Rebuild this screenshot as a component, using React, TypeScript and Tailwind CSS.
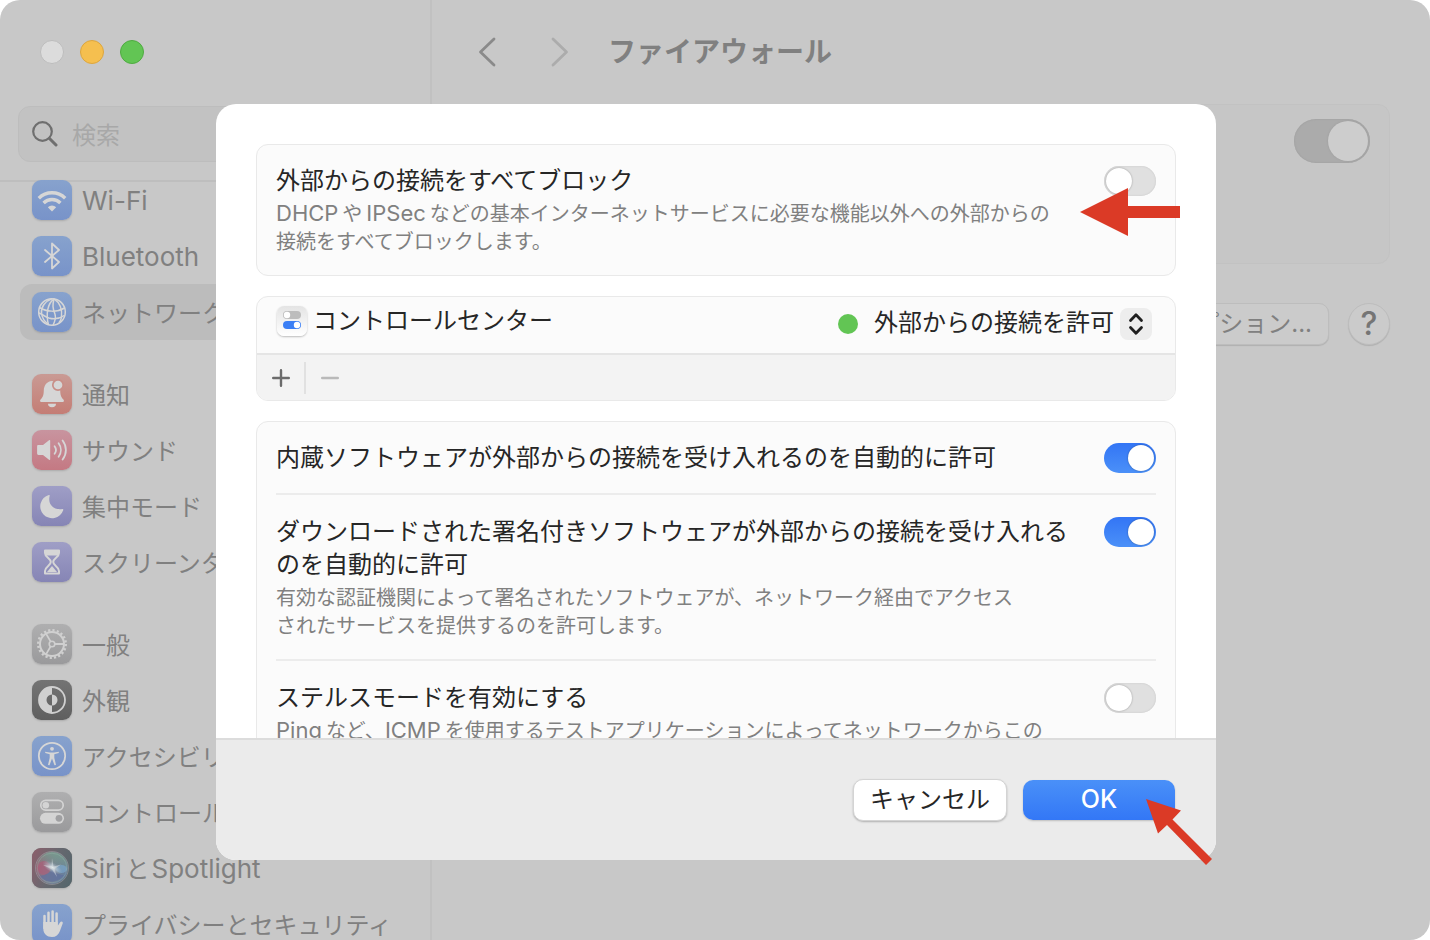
import type { ReactNode } from "react";
import clsx from "clsx";

const icons: Record<string, ReactNode> = {
    wifi: (
        <>
            <g fill="none" stroke="#d6d6d6" strokeWidth="3.4">
                <path d="M6.8 18.2a18.6 18.6 0 0 1 26.4 0" />
                <path d="M11.6 23a11.9 11.9 0 0 1 16.8 0" />
            </g>
            <path d="M20 31.400l-4.200-4.200a6 6 0 0 1 8.400 0z" fill="#d6d6d6" />
        </>
    ),
    bluetooth: (
        <path
            d="M13 14l14 12-7 6.5V7.5l7 6.5-14 12"
            fill="none"
            stroke="#d6d6d6"
            strokeWidth="1.8"
            strokeLinejoin="round"
            strokeLinecap="round"
        />
    ),
    globe: (
        <g fill="none" stroke="#d6d6d6" strokeWidth="1.5">
            <circle cx="20" cy="20" r="13.3" />
            <path d="M22 6.8c-6 4-8.5 15-5.5 26.2" />
            <path d="M22 6.8c-1.5 6-1.5 9 1 15.5 1 3 0 7-2 11" />
            <path d="M22 6.8c5 3.2 8.5 9 7.5 18.5-.5 2.2-1 3.5-2.5 5.5" />
            <path d="M20 6.8C13 9 9 15 9.5 21c.5 4.5 3 8.5 6.5 11" />
            <path d="M7.500 15.500c7 4.500 17.500 5 25 .5" />
            <path d="M6.8 21c3 1 6 3.5 10 5 5 1.500 11 .5 15.500-2.500" />
        </g>
    ),
    bell: (
        <>
            <path
                d="M20 7c-5.600.5-8 4.500-8.200 9.300-.2 5.500-1 7-3.200 9.200-1.100 1.200-.6 2.500.9 2.500h21c1.500 0 2-1.300.9-2.500-2.200-2.200-3-3.700-3.200-9.200A9.500 9.500 0 0 0 20 7z"
                fill="#d6d6d6"
            />
            <path d="M16 29.800h8a4 3.400 0 0 1-8 0z" fill="#d6d6d6" />
            <circle cx="26" cy="11" r="5.2" fill="#d6d6d6" stroke="#c88e87" strokeWidth="1.7" />
        </>
    ),
    sound: (
        <>
            <path d="M6.500 15h4.500l6-4.800c.7-.5 1.200-.2 1.200.6v18.400c0 .8-.5 1.100-1.200.6L11 25H6.500c-.9 0-1.400-.5-1.400-1.400v-7.200c0-.9.5-1.400 1.400-1.400z" fill="#d6d6d6" />
            <g fill="none" stroke="#d6d6d6" strokeWidth="1.8" strokeLinecap="round">
                <path d="M22.600 16.200c1.700 2.300 1.700 5.300 0 7.600" />
                <path d="M26.600 13.300c3 4 3 9.400 0 13.400" />
                <path d="M30.600 10.500c4.400 5.800 4.400 13.200 0 19" />
            </g>
        </>
    ),
    moon: (
        <path
            d="M16.800 9c.6-.3 1.200.1.9.8-2.200 7.800 3.200 14.600 12.600 13.200.8-.1 1.300.4.9 1.200A11.800 11.800 0 1 1 16.800 9z"
            fill="#d6d6d6"
        />
    ),
    hourglass: (
        <>
            <path
                d="M13 8.500h14v2.500c0 4.500-5.800 5.500-5.800 9s5.800 4.500 5.800 9v2.500H13V29c0-4.500 5.800-5.500 5.800-9S13 15.500 13 11z"
                fill="none"
                stroke="#d6d6d6"
                strokeWidth="2"
                strokeLinejoin="round"
            />
            <path d="M14 8.500h12v5H14z" fill="#d6d6d6" />
            <path d="M20 24l5 6H15z" fill="#d6d6d6" />
        </>
    ),
    gear: (
        <g fill="none" stroke="#d0d0d0">
            <circle cx="20" cy="20" r="13.8" strokeWidth="2.4" strokeDasharray="2.2 2.136" />
            <circle cx="20" cy="20" r="12" strokeWidth="2" />
            <circle cx="20" cy="20" r="2.8" strokeWidth="1.6" />
            <path d="M22.800 20H32M18.500 17.400L14 9.600M18.500 22.600L14 30.400" strokeWidth="1.8" />
        </g>
    ),
    appearance: (
        <>
            <circle cx="20" cy="20" r="13" fill="none" stroke="#d0d0d0" strokeWidth="1.8" />
            <path d="M20 7a13 13 0 0 0 0 26v-7.500a5.500 5.500 0 0 1 0-11z" fill="#d0d0d0" />
            <path d="M20 14.500a5.500 5.500 0 0 1 0 11z" fill="#d0d0d0" />
        </>
    ),
    accessibility: (
        <>
            <circle cx="20" cy="20" r="13.2" fill="none" stroke="#d6d6d6" strokeWidth="1.8" />
            <circle cx="20" cy="12.8" r="1.9" fill="#d6d6d6" />
            <path
                d="M13.200 15.700l4.800.9h4l4.800-.9v1.300l-4.500 1.200v3.500l1.700 7.200-1.500.4-2.500-6.800-2.500 6.800-1.500-.4 1.700-7.200v-3.500l-4.500-1.200z"
                fill="#d6d6d6"
            />
        </>
    ),
    switches: (
        <>
            <rect x="8.8" y="8.4" width="22.4" height="9.8" rx="4.9" fill="none" stroke="#d4d4d4" strokeWidth="1.7" />
            <circle cx="13.8" cy="13.3" r="3.3" fill="#d4d4d4" />
            <rect x="8" y="20.8" width="24" height="11" rx="5.5" fill="#d4d4d4" />
            <circle cx="27" cy="26.3" r="3.4" fill="#a0a0a2" />
        </>
    ),
    siri: (
        <>
            <defs>
                <radialGradient id="siri-core">
                    <stop offset="0" stopColor="#e2e8ea" />
                    <stop offset="0.35" stopColor="#c3d0d8" stopOpacity="0.7" />
                    <stop offset="1" stopColor="#a0b0c0" stopOpacity="0" />
                </radialGradient>
                <linearGradient id="siri-back" x1="0" x2="1" y1="0.3" y2="0.7">
                    <stop offset="0" stopColor="#87606c" />
                    <stop offset="0.5" stopColor="#67686f" />
                    <stop offset="1" stopColor="#56666c" />
                </linearGradient>
                <linearGradient id="siri-orb" x1="0" x2="1" y1="0.3" y2="0.7">
                    <stop offset="0" stopColor="#9c5f72" />
                    <stop offset="0.45" stopColor="#7b7f90" />
                    <stop offset="1" stopColor="#64809f" />
                </linearGradient>
                <linearGradient id="siri-top" x1="0.3" x2="0.1" y1="0" y2="1">
                    <stop offset="0" stopColor="#769a8d" stopOpacity="0.9" />
                    <stop offset="0.5" stopColor="#769a8d" stopOpacity="0" />
                </linearGradient>
            </defs>
            <rect width="40" height="40" fill="url(#siri-back)" />
            <circle cx="20" cy="20" r="16" fill="url(#siri-orb)" />
            <circle cx="20" cy="20" r="16" fill="url(#siri-top)" />
            <ellipse cx="12" cy="20" rx="6.5" ry="7" fill="#b05c78" opacity="0.6" />
            <ellipse cx="29.5" cy="21" rx="5.5" ry="4" fill="#7ba5cb" opacity="0.7" />
            <path d="M7 28c8-1 12-4 14-8 2 5 6 7 11 7-5 8-19 9-25 1z" fill="#5d6ea0" opacity="0.6" />
            <ellipse cx="20.5" cy="19.5" rx="11" ry="5" fill="url(#siri-core)" transform="rotate(30 20.5 19.5)" />
            <path d="M20 10l1.500 8.500 7.500-2-6.500 4.500 2.500 8-5-7.500-9-4.500 8.500 1z" fill="#dfe5e8" opacity="0.5" />
            <circle cx="20" cy="20" r="16.5" fill="none" stroke="#a3a3a8" strokeWidth="0.8" opacity="0.7" />
            <circle cx="20" cy="20" r="14.8" fill="none" stroke="#9fb5ad" strokeWidth="0.6" opacity="0.6" />
        </>
    ),
    hand: (
        <>
            <path
                d="M11.300 18v6.500C11.300 30 15 33 20 33c4 0 6.300-2 7.700-5.500l3-8c.6-1.700-1.400-2.800-2.500-1.200L25.600 22V18z"
                fill="#d6d6d6"
            />
            <g stroke="#d6d6d6" strokeWidth="2.5" strokeLinecap="round">
                <path d="M12.500 12v12M16.500 8.800v14M20.600 7.500v15M24.600 9.500v13" />
            </g>
        </>
    ),
};

const tints = {
    blue: "from-[#87a2cd] to-[#7893c9]",
    red: "from-[#c99a94] to-[#c47d75]",
    pink: "from-[#c8949f] to-[#c47983]",
    purple: "from-[#9f9ec6] to-[#8685b5]",
    gray: "from-[#afafb0] to-[#9a9a9c]",
    dark: "from-[#747474] to-[#5f5f5f]",
};

interface NavItem {
    icon: string;
    tint: keyof typeof tints;
    label: ReactNode;
    active?: boolean;
}

const navGroups: NavItem[][] = [
    [
        { icon: "wifi", tint: "blue", label: <span className="text-[26px]">Wi-Fi</span> },
        { icon: "bluetooth", tint: "blue", label: <span className="text-[26px]">Bluetooth</span> },
        { icon: "globe", tint: "blue", label: "ネットワーク", active: true },
    ],
    [
        { icon: "bell", tint: "red", label: "通知" },
        { icon: "sound", tint: "pink", label: "サウンド" },
        { icon: "moon", tint: "purple", label: "集中モード" },
        { icon: "hourglass", tint: "purple", label: "スクリーンタイム" },
    ],
    [
        { icon: "gear", tint: "gray", label: "一般" },
        { icon: "appearance", tint: "dark", label: "外観" },
        { icon: "accessibility", tint: "blue", label: "アクセシビリティ" },
        { icon: "switches", tint: "gray", label: "コントロールセンター" },
        {
            icon: "siri",
            tint: "dark",
            label: (
                <>
                    <span className="mr-1 text-[26px]">Siri</span>と<span className="ml-0.5 text-[26px]">Spotlight</span>
                </>
            ),
        },
        { icon: "hand", tint: "blue", label: "プライバシーとセキュリティ" },
    ],
];

const Sidebar = () => (
    <aside className="flex w-[432px] shrink-0 flex-col border-r-2 border-[#c1c1c1]">
        <div className="h-[182px] shrink-0 border-b-2 border-[#bebebe]">
            <div className="flex gap-4 px-10 pt-10">
                <button aria-label="閉じる" className="size-6 rounded-full border border-[#bdbdbd] bg-[#dcdcdc]" />
                <button aria-label="しまう" className="size-6 rounded-full border border-[#dca63f] bg-[#f5bf4f]" />
                <button aria-label="拡大" className="size-6 rounded-full border border-[#4fab41] bg-[#62c554]" />
            </div>
            <label className="mx-[18px] mt-[42px] flex h-14 items-center gap-[14px] rounded-xl border border-[#bdbdbd] bg-[#c2c2c2] pl-[13px]">
                <svg viewBox="0 0 26 26" className="size-[26px] shrink-0" fill="none" stroke="#6f6f6f" strokeLinecap="round">
                    <circle cx="10.5" cy="10.5" r="9.3" strokeWidth="2.2" />
                    <path d="M17.500 17.500l6.500 6.500" strokeWidth="3" />
                </svg>
                <input
                    type="text"
                    aria-label="検索"
                    placeholder="検索"
                    className="min-w-0 flex-1 bg-transparent pt-[3px] text-2xl outline-none placeholder:text-[#a8a8a8]"
                />
            </label>
        </div>
        <nav className="-mt-2.5 flex flex-col gap-[26px] px-5">
            {navGroups.map((group, idx) => (
                <ul key={idx}>
                    {group.map((item) => (
                        <li key={item.icon}>
                            <a
                                href="#"
                                className={clsx(
                                    "flex h-14 items-center gap-2.5 rounded-xl pl-3 whitespace-nowrap",
                                    item.active && "bg-[#bcbcbc]",
                                )}
                            >
                                <span
                                    className={clsx(
                                        "size-10 shrink-0 overflow-hidden rounded-[9px] bg-linear-to-b shadow-[0_1px_2px_rgba(0,0,0,0.15)]",
                                        tints[item.tint],
                                    )}
                                >
                                    <svg viewBox="0 0 40 40" className="size-10">
                                        {icons[item.icon]}
                                    </svg>
                                </span>
                                <span className="pt-[3px]">{item.label}</span>
                            </a>
                        </li>
                    ))}
                </ul>
            ))}
        </nav>
    </aside>
);

const MainPane = () => (
    <main className="min-w-0 flex-1 px-10">
        <header className="flex h-[104px] items-center">
            <button aria-label="戻る" className="ml-1.5">
                <svg viewBox="0 0 18 30" className="h-[30px] w-[18px]" fill="none" stroke="#8a8a8a" strokeWidth="2.8" strokeLinecap="round" strokeLinejoin="round">
                    <path d="M16 2L2.500 15 16 28" />
                </svg>
            </button>
            <button aria-label="進む" disabled className="ml-[55px]">
                <svg viewBox="0 0 18 30" className="h-[30px] w-[18px]" fill="none" stroke="#acacac" strokeWidth="2.8" strokeLinecap="round" strokeLinejoin="round">
                    <path d="M2 2l13.500 13L2 28" />
                </svg>
            </button>
            <h1 className="ml-[39px] pt-0.5 text-[28px] font-bold text-[#808080]">ファイアウォール</h1>
        </header>
        <div className="flex h-40 justify-end rounded-xl border border-[#c2c2c2] bg-[#c6c6c6] pt-[14px] pr-[19px]">
            <input
                type="checkbox"
                role="switch"
                aria-label="ファイアウォール"
                defaultChecked
                className="h-11 w-[76px] appearance-none rounded-full bg-[#ababab] p-0.5 shadow-[inset_0_0_2px_#9a9a9a] before:block before:size-10 before:rounded-full before:bg-[#cdcdcd] before:shadow-[0_0_2px_#999] checked:before:ml-8"
            />
        </div>
        <div className="mt-[39px] flex justify-end gap-[19px]">
            <button className="h-[42px] rounded-[10px] border border-[#bdbdbd] bg-[#cbcbcb] px-4 text-2xl leading-9 shadow-[0_1px_1px_rgba(0,0,0,0.12)]">
                オプション...
            </button>
            <button
                aria-label="ヘルプ"
                className="size-[42px] rounded-full border border-[#bdbdbd] bg-[#cbcbcb] text-[32px] leading-10 font-medium text-[#757575] shadow-[0_1px_1px_rgba(0,0,0,0.12)]"
            >
                ?
            </button>
        </div>
    </main>
);

interface SettingRowProps {
    id: string;
    title: string;
    lines?: ReactNode[];
    checked?: boolean;
}

const SettingRow = ({ id, title, lines = [], checked = false }: SettingRowProps) => (
    <div className="flex items-start justify-between gap-8 border-[#ececec] pt-5 pb-[19px] not-last:border-b-2 first:pt-[19px]">
        <div className="min-w-0">
            <label htmlFor={id} className="block text-2xl leading-[33px]">
                {title}
            </label>
            {lines.length > 0 && (
                <p className="mt-[3px] text-xl leading-7 whitespace-nowrap text-[#808080]">
                    {lines.map((line, idx) => (
                        <span key={idx} className="block">
                            {line}
                        </span>
                    ))}
                </p>
            )}
        </div>
        <input
            id={id}
            type="checkbox"
            role="switch"
            defaultChecked={checked}
            className="mt-0.5 h-[30px] w-[52px] shrink-0 appearance-none rounded-full bg-[#e0e0e0] p-0.5 shadow-[inset_0_0_2px_#c4c4c4] before:block before:size-[26px] before:rounded-full before:bg-white before:shadow-[0_0_2px_rgba(0,0,0,0.35)] checked:bg-linear-to-b checked:from-[#3375f5] checked:to-[#4b90f8] checked:shadow-none checked:before:ml-[22px]"
        />
    </div>
);

const AppList = () => (
    <section className="overflow-hidden rounded-xl border border-[#e9e9e9] bg-[#fbfbfb]">
        <div className="flex h-14 items-center justify-between pr-[23px] pb-0.5 pl-5">
            <div className="flex items-center gap-1.5 pb-1.5">
                <svg viewBox="0 0 30 30" className="size-[30px] rounded-[7px] bg-linear-to-b from-[#e4e4e4] to-white shadow-[0_1px_2px_rgba(0,0,0,0.25)]">
                    <rect x="6" y="5" width="18" height="8" rx="4" fill="#bdbdbd" />
                    <circle cx="10" cy="9" r="3.2" fill="#fff" />
                    <rect x="6" y="15" width="18" height="8" rx="4" fill="#3b7ff5" />
                    <circle cx="20" cy="19" r="3.2" fill="#fff" />
                </svg>
                <span className="text-2xl">コントロールセンター</span>
            </div>
            <div className="flex items-center gap-4">
                <span className="size-5 rounded-full bg-[#62c554]" />
                <div className="relative">
                    <select aria-label="コントロールセンター" className="block h-8 w-[278px] appearance-none bg-transparent pb-0.5 text-2xl leading-[30px] outline-none">
                        <option>外部からの接続を許可</option>
                        <option>外部からの接続をブロック</option>
                    </select>
                    <span className="pointer-events-none absolute top-0 right-0 flex size-8 items-center justify-center rounded-lg bg-[#ededed]">
                        <svg viewBox="0 0 16 24" className="h-6 w-4" fill="none" stroke="#1f1f1f" strokeWidth="2.8" strokeLinecap="round" strokeLinejoin="round">
                            <path d="M2.500 8.500L8 2.800l5.500 5.700M2.500 15.500L8 21.200l5.500-5.700" />
                        </svg>
                    </span>
                </div>
            </div>
        </div>
        <div className="flex h-[47px] items-center border-t-2 border-[#e5e5e5] bg-[#f3f3f3]">
            <button aria-label="追加" className="flex w-[47px] justify-center">
                <svg viewBox="0 0 18 18" className="size-[18px]" stroke="#6b6b6b" strokeWidth="2.4" strokeLinecap="round">
                    <path d="M1.200 9h15.600M9 1.200v15.600" />
                </svg>
            </button>
            <span className="h-8 w-0.5 bg-[#e1e1e1]" />
            <button aria-label="削除" disabled className="flex w-12 justify-center">
                <svg viewBox="0 0 18 18" className="size-[18px]" stroke="#b9b9b9" strokeWidth="2.4" strokeLinecap="round">
                    <path d="M1.200 9h15.600" />
                </svg>
            </button>
        </div>
    </section>
);

const FirewallDialog = () => (
    <div
        role="dialog"
        aria-label="ファイアウォールオプション"
        className="relative w-[1000px] max-w-full rounded-[20px] bg-white text-[#262626]"
    >
        <div className="flex h-[634px] flex-col gap-5 overflow-hidden px-10 pt-10">
            <section className="shrink-0 rounded-xl border border-[#e9e9e9] bg-[#fbfbfb] px-[19px]">
                <SettingRow
                    id="block-all"
                    title="外部からの接続をすべてブロック"
                    lines={[
                        <>
                            <span className="mr-1 text-[22px] leading-none">DHCP</span>や
                            <span className="mx-1 text-[22px] leading-none">IPSec</span>
                            などの基本インターネットサービスに必要な機能以外への外部からの
                        </>,
                        "接続をすべてブロックします。",
                    ]}
                />
            </section>
            <div className="shrink-0">
                <AppList />
            </div>
            <section className="shrink-0 rounded-xl border border-[#e9e9e9] bg-[#fbfbfb] px-[19px]">
                <SettingRow id="builtin" title="内蔵ソフトウェアが外部からの接続を受け入れるのを自動的に許可" checked />
                <SettingRow
                    id="signed"
                    title="ダウンロードされた署名付きソフトウェアが外部からの接続を受け入れるのを自動的に許可"
                    lines={[
                        "有効な認証機関によって署名されたソフトウェアが、ネットワーク経由でアクセス",
                        "されたサービスを提供するのを許可します。",
                    ]}
                    checked
                />
                <SettingRow
                    id="stealth"
                    title="ステルスモードを有効にする"
                    lines={[
                        <>
                            <span className="mr-1 text-[22px] leading-none">Ping</span>など、
                            <span className="mr-1 text-[22px] leading-none">ICMP</span>
                            を使用するテストアプリケーションによってネットワークからこの
                        </>,
                    ]}
                />
            </section>
        </div>
        <footer className="flex h-[122px] items-center justify-end gap-4 rounded-b-[20px] border-t-2 border-[#dcdcdc] bg-[#ebebeb] pr-[41px]">
            <button className="h-[42px] w-[154px] rounded-[10px] border border-[#d4d4d4] bg-white text-2xl leading-9 shadow-[0_1px_2px_rgba(0,0,0,0.25)]">
                キャンセル
            </button>
            <button className="h-10 w-[152px] rounded-[10px] bg-linear-to-b from-[#4a90f8] to-[#3377f6] pb-0.5 text-[25px] leading-9 font-medium text-white shadow-[0_1px_2px_rgba(0,0,0,0.2)]">
                OK
            </button>
        </footer>
        <svg viewBox="0 0 100 48" className="pointer-events-none absolute top-[84px] left-[864px] h-12 w-[100px]" fill="#db3a26">
            <path d="M0 24L48 0v18h52v12H48v18z" />
        </svg>
        <svg viewBox="0 0 68 68" className="pointer-events-none absolute top-[694px] left-[930px] size-[68px]" fill="#db3a26">
            <path d="M0 1l35 11.500-8.500 9L66 61l-6 6L21 27l-9 8.500z" />
        </svg>
    </div>
);

export default function App() {
    return (
        <div
            lang="ja"
            className="relative flex h-screen overflow-hidden rounded-[20px] bg-[#c8c8c8] font-['Inter','Noto_Sans_CJK_JP',sans-serif] text-2xl text-[#808080]"
        >
            <Sidebar />
            <MainPane />
            <div className="absolute inset-0 flex items-start justify-center pt-[104px] pl-0.5">
                <FirewallDialog />
            </div>
        </div>
    );
}
